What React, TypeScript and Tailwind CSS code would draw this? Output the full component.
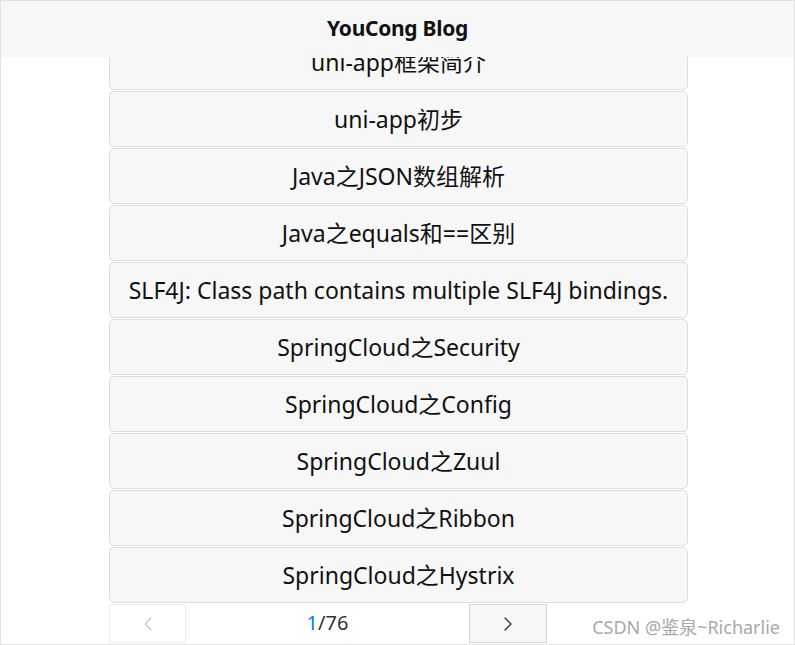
import { ChevronLeft, ChevronRight } from "lucide-react";

const posts = [
  "uni-app框架简介",
  "uni-app初步",
  "Java之JSON数组解析",
  "Java之equals和==区别",
  "SLF4J: Class path contains multiple SLF4J bindings.",
  "SpringCloud之Security",
  "SpringCloud之Config",
  "SpringCloud之Zuul",
  "SpringCloud之Ribbon",
  "SpringCloud之Hystrix",
];

const font = { fontFamily: '"Noto Sans", "Noto Sans CJK SC", sans-serif' };

export default function App() {
  return (
    <div
      className="w-[795px] h-[645px] bg-white border border-[#e3e3e3] flex flex-col overflow-hidden relative"
      style={font}
    >
      {/* nav bar */}
      <div className="h-[56px] shrink-0 bg-[#f7f7f7] flex items-center justify-center relative z-10">
        <span className="text-[21px] font-bold text-[#111] tracking-[-0.3px]">YouCong Blog</span>
      </div>

      {/* list */}
      <div className="flex-1 overflow-hidden flex flex-col items-start pl-[108px]">
        <div className="w-[579px] -mt-[23px] flex flex-col gap-px">
          {posts.map((p) => (
            <div
              key={p}
              className="h-[56px] shrink-0 rounded-[5px] border border-[#dddddd] bg-[#f7f7f7] flex items-center justify-center text-[23px] text-[#111] leading-none whitespace-nowrap"
            >
              {p}
            </div>
          ))}
        </div>

        {/* pager */}
        <div className="w-[438px] h-[39px] mt-px flex items-center">
          <div className="w-[77px] h-full border border-[#eeeeee] bg-white flex items-center justify-center">
            <ChevronLeft size={24} strokeWidth={1.1} className="text-[#c4c4c4]" />
          </div>
          <div className="flex-1 text-center text-[20px] text-[#333] pb-[2px]">
            <span className="text-[#007aff]">1</span>/76
          </div>
          <div className="w-[78px] h-full border border-[#d8d8d8] bg-[#f7f7f7] flex items-center justify-center">
            <ChevronRight size={24} strokeWidth={1.3} className="text-[#333]" />
          </div>
        </div>
      </div>

      <span className="absolute right-[14px] bottom-[3px] text-[18px] text-[#a8a8a8]">
        CSDN @鉴泉~Richarlie
      </span>
    </div>
  );
}
